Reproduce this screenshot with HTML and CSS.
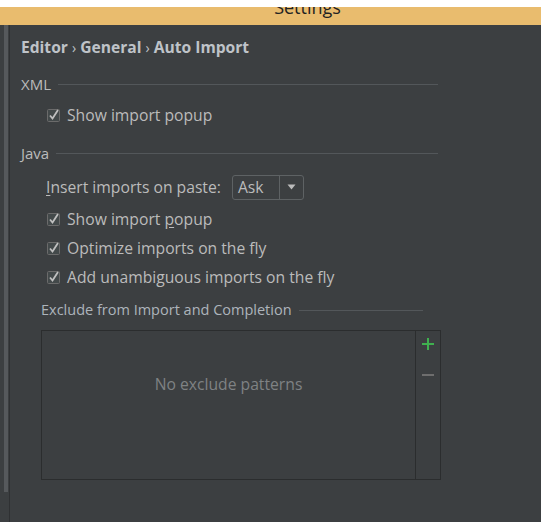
FILE: index.html
```html
<!DOCTYPE html>
<html>
<head>
<meta charset="utf-8">
<title>Settings</title>
<link rel="stylesheet" href="styles.css">
</head>
<body>
<div class="titlebar"><span class="title">Settings</span></div>
<div class="frame">
  <div class="side"><div class="thumb"></div></div>
  <div class="panel">
    <div class="crumb">Editor <span class="sep">&rsaquo;</span> General <span class="sep">&rsaquo;</span> Auto Import</div>

    <div class="group group-xml"><span class="group-name">XML</span><span class="rule"></span></div>
    <div class="check first-check">
      <svg class="box" width="14" height="14" viewBox="0 0 14 14"><rect x="0.5" y="1.5" width="12" height="12" rx="1" fill="#43494a" stroke="#6b6b6b"/><polyline points="3,7.5 5.5,10.5 11,2" fill="none" stroke="#c0c0c0" stroke-width="1.8"/></svg>
      <span>Show import popup</span>
    </div>

    <div class="group group-java"><span class="group-name">Java</span><span class="rule"></span></div>
    <div class="paste-row">
      <span class="paste-label"><u>I</u>nsert imports on paste:</span>
      <div class="combo"><span class="combo-value">Ask</span><span class="combo-arrow"><svg width="9" height="6" viewBox="0 0 9 6"><polygon points="0.5,0.5 8.5,0.5 4.5,5.5" fill="#bbbbbb"/></svg></span></div>
    </div>
    <div class="check java-first">
      <svg class="box" width="14" height="14" viewBox="0 0 14 14"><rect x="0.5" y="1.5" width="12" height="12" rx="1" fill="#43494a" stroke="#6b6b6b"/><polyline points="3,7.5 5.5,10.5 11,2" fill="none" stroke="#c0c0c0" stroke-width="1.8"/></svg>
      <span>Show import <u>p</u>opup</span>
    </div>
    <div class="check">
      <svg class="box" width="14" height="14" viewBox="0 0 14 14"><rect x="0.5" y="1.5" width="12" height="12" rx="1" fill="#43494a" stroke="#6b6b6b"/><polyline points="3,7.5 5.5,10.5 11,2" fill="none" stroke="#c0c0c0" stroke-width="1.8"/></svg>
      <span>Optimize imports on the fly</span>
    </div>
    <div class="check">
      <svg class="box" width="14" height="14" viewBox="0 0 14 14"><rect x="0.5" y="1.5" width="12" height="12" rx="1" fill="#43494a" stroke="#6b6b6b"/><polyline points="3,7.5 5.5,10.5 11,2" fill="none" stroke="#c0c0c0" stroke-width="1.8"/></svg>
      <span>Add unambiguous imports on the fly</span>
    </div>

    <div class="group group-exclude"><span class="group-name">Exclude from Import and Completion</span><span class="rule"></span></div>
    <div class="exclude-box">
      <div class="exclude-list">No exclude patterns</div>
      <div class="exclude-tools">
        <svg width="12" height="12" viewBox="0 0 12 12"><rect x="5" y="0" width="2" height="12" fill="#3fb04f"/><rect x="0" y="5" width="12" height="2" fill="#3fb04f"/></svg>
        <svg class="minus" width="12" height="2" viewBox="0 0 12 2"><rect x="0" y="0" width="12" height="2" fill="#6e6e6e"/></svg>
      </div>
    </div>
  </div>
</div>
</body>
</html>
```

FILE: styles.css
```css
/* Darcula settings page: Editor > General > Auto Import */

body
{ margin: 0;
  background-color: #ffffff;
  font-family: "Open Sans", "Noto Sans", sans-serif;
  color: #bbbbbb;
  overflow: hidden;
}

u { text-decoration: underline; text-underline-offset: 2px; }

/* window title, cut off at the top */

div.titlebar
{ height: 18px;
  border-top: 7px solid #ffffff;
  background-color: #e9bc6e;
  display: flex;
  justify-content: center;
  overflow: hidden;
}

span.title
{ margin-top: -9px;
  margin-left: 74px;
  font-size: 18px;
  line-height: 18px;
  color: #222222;
}

div.frame
{ display: flex;
  height: 497px;
  background-color: #3c3f41;
}

div.side
{ width: 10px;
  border-right: 1px solid #2f3133;
  padding-left: 4px;
  padding-right: 1px;
  box-sizing: border-box;
  background-color: #3c3f41;
  display: flex;
  flex-direction: column;
}

div.thumb
{ height: 467px;
  background-color: #56595c;
}

div.panel
{ flex: 1;
  padding-left: 11px;
  display: flex;
  flex-direction: column;
}

div.crumb
{ margin-top: 12px;
  height: 20px;
  line-height: 20px;
  font-size: 15.6px;
  font-weight: bold;
  color: #bfc3c8;
}

span.sep
{ font-weight: normal;
  font-size: 14px;
  line-height: 14px;
}

/* titled separators */

div.group
{ display: flex;
  align-items: center;
  gap: 7px;
  width: 417px;
  height: 18px;
  line-height: 18px;
  font-size: 15px;
}

span.rule
{ flex: 1;
  height: 1px;
  background-color: #53575a;
}

div.group-xml { margin-top: 18px; }
div.group-java { margin-top: 18px; }

div.group-exclude
{ margin-top: 13px;
  margin-left: 20px;
  width: 382px;
  font-size: 14.5px;
  color: #adb4bb;
}

/* checkboxes */

div.check
{ display: flex;
  align-items: center;
  gap: 6px;
  height: 22px;
  margin-left: 26px;
  margin-top: 7px;
  font-size: 15.7px;
}

div.first-check { margin-top: 11px; }
div.java-first { margin-top: 8px; }

svg.box { flex: none; }

/* combo box */

div.paste-row
{ display: flex;
  align-items: center;
  gap: 11px;
  margin-top: 12px;
  margin-left: 25px;
  height: 26px;
  font-size: 15.7px;
}

div.combo
{ display: flex;
  width: 72px;
  height: 25px;
  box-sizing: border-box;
  border: 1px solid #5e6264;
  border-radius: 3px;
}

span.combo-value
{ flex: 1;
  padding-left: 5px;
  line-height: 22px;
}

span.combo-arrow
{ width: 23px;
  border-left: 1px solid #5e6264;
  display: flex;
  align-items: center;
  justify-content: center;
}

/* exclude list */

div.exclude-box
{ display: flex;
  margin-top: 11px;
  margin-left: 20px;
  width: 400px;
  height: 150px;
  box-sizing: border-box;
  border: 1px solid #2b2d2e;
}

div.exclude-list
{ flex: 1;
  padding-top: 44px;
  text-align: center;
  font-size: 15.7px;
  line-height: 18px;
  color: #7f8284;
  border-right: 1px solid #2b2d2e;
}

div.exclude-tools
{ width: 24px;
  display: flex;
  flex-direction: column;
  align-items: center;
  padding-top: 7px;
  box-sizing: border-box;
}

svg.minus { margin-top: 24px; }
```
